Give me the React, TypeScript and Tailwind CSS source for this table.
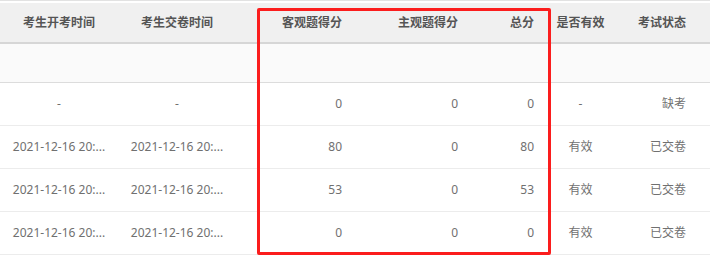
import React from "react";

type Row = {
  start: string;
  submit: string;
  objective: string;
  subjective: string;
  total: string;
  valid: string;
  status: string;
};

const rows: Row[] = [
  { start: "-", submit: "-", objective: "0", subjective: "0", total: "0", valid: "-", status: "缺考" },
  { start: "2021-12-16 20:...", submit: "2021-12-16 20:...", objective: "80", subjective: "0", total: "80", valid: "有效", status: "已交卷" },
  { start: "2021-12-16 20:...", submit: "2021-12-16 20:...", objective: "53", subjective: "0", total: "53", valid: "有效", status: "已交卷" },
  { start: "2021-12-16 20:...", submit: "2021-12-16 20:...", objective: "0", subjective: "0", total: "0", valid: "有效", status: "已交卷" },
];

const grid = "grid grid-cols-[118px_118px_116px_116px_76px_73px_93px] items-center";

export default function App() {
  return (
    <div
      className="relative h-[269px] w-[718px] overflow-hidden bg-white text-[12px]"
      style={{ fontFamily: '"Noto Sans", "Noto Sans CJK SC", sans-serif' }}
    >
      <div className="h-px w-[710px] bg-[#e2e2e2]" />
      <div className={`${grid} mt-[2px] h-[41px] w-[710px] border-b-2 border-[#d6d6d6] bg-[#f0f0f0] font-bold text-[#555]`}>
        <div className="px-[10px] text-center">考生开考时间</div>
        <div className="px-[10px] text-center">考生交卷时间</div>
        <div className="px-[10px] text-right">客观题得分</div>
        <div className="px-[10px] text-right">主观题得分</div>
        <div className="px-[10px] text-right">总分</div>
        <div className="text-center">是否有效</div>
        <div className="pr-[24px] text-right">考试状态</div>
      </div>
      <div className="h-[39px] w-[710px] border-b border-[#dcdcdc] bg-[#fafafa]" />
      {rows.map((r, i) => (
        <div key={i} className={`${grid} h-[43px] w-[710px] border-b border-[#ececec] text-[#707070]`}>
          <div className="whitespace-nowrap text-center">{r.start}</div>
          <div className="whitespace-nowrap text-center">{r.submit}</div>
          <div className="px-[10px] text-right">{r.objective}</div>
          <div className="px-[10px] text-right">{r.subjective}</div>
          <div className="px-[10px] text-right">{r.total}</div>
          <div className="text-center">{r.valid}</div>
          <div className="pr-[24px] text-right">{r.status}</div>
        </div>
      ))}
      <div className="absolute left-[257px] top-[8px] h-[247px] w-[294px] rounded-[2px] border-[3px] border-[#fb1d1d]" />
    </div>
  );
}
